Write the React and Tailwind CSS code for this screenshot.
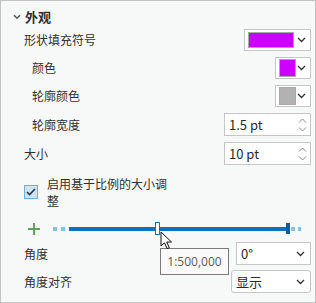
import React from 'react';

const font = { fontFamily: '"Noto Sans CJK SC", "Noto Sans", sans-serif' };

function Chevron({ className = '' }) {
  return (
    <svg width="9" height="6" viewBox="0 0 9 6" className={className}>
      <path d="M1 1l3.5 3.5L8 1" fill="none" stroke="#333" strokeWidth="1.3" />
    </svg>
  );
}

function SwatchPicker({ color, wide }) {
  return (
    <div className={`flex items-center bg-white border border-[#c6c6c6] h-[22px] pl-[3px] ${wide ? 'w-[67px]' : 'w-[36px]'}`}>
      <div
        className={`border border-[#a8a8a8] ${wide ? 'w-[46px] h-[16px]' : 'w-[17px] h-[18px]'}`}
        style={{ background: color }}
      />
      <Chevron className="ml-auto mr-[4px]" />
    </div>
  );
}

function Spinner({ value }) {
  return (
    <div className="flex items-center bg-white border border-[#c6c6c6] h-[23px] w-[87px] pl-[4px] pr-[3px]">
      <span className="text-[13px] text-[#2a2a2a]">{value}</span>
      <div className="ml-auto flex flex-col gap-[4px]">
        <svg width="9" height="5" viewBox="0 0 9 5"><path d="M1 4.5L4.5 1L8 4.5" fill="none" stroke="#8a8a8a" strokeWidth="1" /></svg>
        <svg width="9" height="5" viewBox="0 0 9 5"><path d="M1 0.5L4.5 4L8 0.5" fill="none" stroke="#8a8a8a" strokeWidth="1" /></svg>
      </div>
    </div>
  );
}

function Combo({ value, w, rounded }) {
  return (
    <div className={`flex items-center bg-white border border-[#c6c6c6] h-[23px] pl-[4px] ${w} ${rounded ? 'rounded-[3px]' : ''}`}>
      <span className="text-[13px] text-[#2a2a2a] leading-none">{value}</span>
      <Chevron className="ml-auto mr-[5px]" />
    </div>
  );
}

function Row({ label, indent, children, mt, h }) {
  return (
    <div className={`flex items-center ${mt} ${h}`}>
      <span className={`text-[12px] text-[#303030] ${indent ? 'pl-[8px]' : ''}`}>{label}</span>
      <div className="ml-auto">{children}</div>
    </div>
  );
}

export default function App() {
  return (
    <div className="relative w-[316px] h-[303px] bg-[#f7f8f8] border border-[#c4c4c4] overflow-hidden" style={font}>
      <div className="pl-[23px] pr-[4px]">
        <div className="flex items-center h-[24px] mt-[4px] -ml-[11px]">
          <svg width="8" height="6" viewBox="0 0 8 6" className="mr-[4px]">
            <path d="M1 1.2l3 3 3-3" fill="none" stroke="#555" strokeWidth="1.5" />
          </svg>
          <span className="text-[13px] font-bold text-[#303030]">外观</span>
        </div>

        <Row label="形状填充符号" mt="mt-0" h="h-[22px]">
          <SwatchPicker color="#cc00ff" wide />
        </Row>
        <Row label="颜色" indent mt="mt-[6px]" h="h-[22px]">
          <SwatchPicker color="#cc00ff" />
        </Row>
        <Row label="轮廓颜色" indent mt="mt-[6px]" h="h-[22px]">
          <SwatchPicker color="#b2b2b2" />
        </Row>
        <Row label="轮廓宽度" indent mt="mt-[6px]" h="h-[23px]">
          <Spinner value="1.5 pt" />
        </Row>
        <Row label="大小" mt="mt-[6px]" h="h-[23px]">
          <Spinner value="10 pt" />
        </Row>

        <div className="flex items-center mt-[10px]">
          <div className="w-[14px] h-[14px] bg-[#cce4f7] border border-[#6fb0e0] flex items-center justify-center shrink-0">
            <svg width="10" height="8" viewBox="0 0 10 8"><path d="M1 4l2.6 2.6L9 1" fill="none" stroke="#333" strokeWidth="1.6" /></svg>
          </div>
          <div className="ml-[9px] text-[12px] leading-[17px] text-[#303030]">
            启用基于比例的大小调<br />整
          </div>
        </div>

        <div className="flex items-center h-[14px] mt-[13px] pl-[4px]">
          <svg width="12" height="12" viewBox="0 0 12 12">
            <path d="M6 0v12M0 6h12" stroke="#5aa55a" strokeWidth="2" />
          </svg>
          <div className="relative flex items-center ml-[13px] h-[14px] w-[248px]">
            <div className="w-[4px] h-[4px] bg-[#86c0e8]" />
            <div className="w-[4px] h-[4px] bg-[#86c0e8] ml-[4px]" />
            <div className="h-[4px] w-[219px] bg-[#0a72c1] ml-[4px]" />
            <div className="w-[4px] h-[4px] bg-[#86c0e8] ml-[5px]" />
            <div className="w-[3px] h-[4px] bg-[#86c0e8] ml-[3px]" />
            <div className="absolute left-[102px] top-[0px] w-[5px] h-[13px] bg-white border border-[#0a72c1]" />
            <div className="absolute left-[233px] top-[1px] w-[4px] h-[11px] bg-[#0a5da0]" />
          </div>
        </div>

        <Row label="角度" mt="mt-[6px]" h="h-[23px]">
          <Combo value="0°" w="w-[75px]" />
        </Row>
        <Row label="角度对齐" mt="mt-[5px]" h="h-[23px]">
          <Combo value="显示" w="w-[80px]" rounded />
        </Row>
      </div>

      <div className="absolute left-[159px] top-[247px] w-[69px] h-[27px] bg-[#fafafa] border border-[#7a7a7a] flex items-center justify-center">
        <span className="text-[12px] text-[#5a5a5a]" style={{ fontFamily: '"Open Sans", "Noto Sans", sans-serif' }}>1:500,000</span>
      </div>

      <svg className="absolute left-[159px] top-[230px]" width="14" height="19" viewBox="0 0 14 19">
        <path d="M1 1v14l3.5-3.2 2.6 5.8 2.2-1-2.6-5.6H11.5z" fill="#fff" stroke="#111" strokeWidth="1" strokeLinejoin="round" />
      </svg>
    </div>
  );
}
